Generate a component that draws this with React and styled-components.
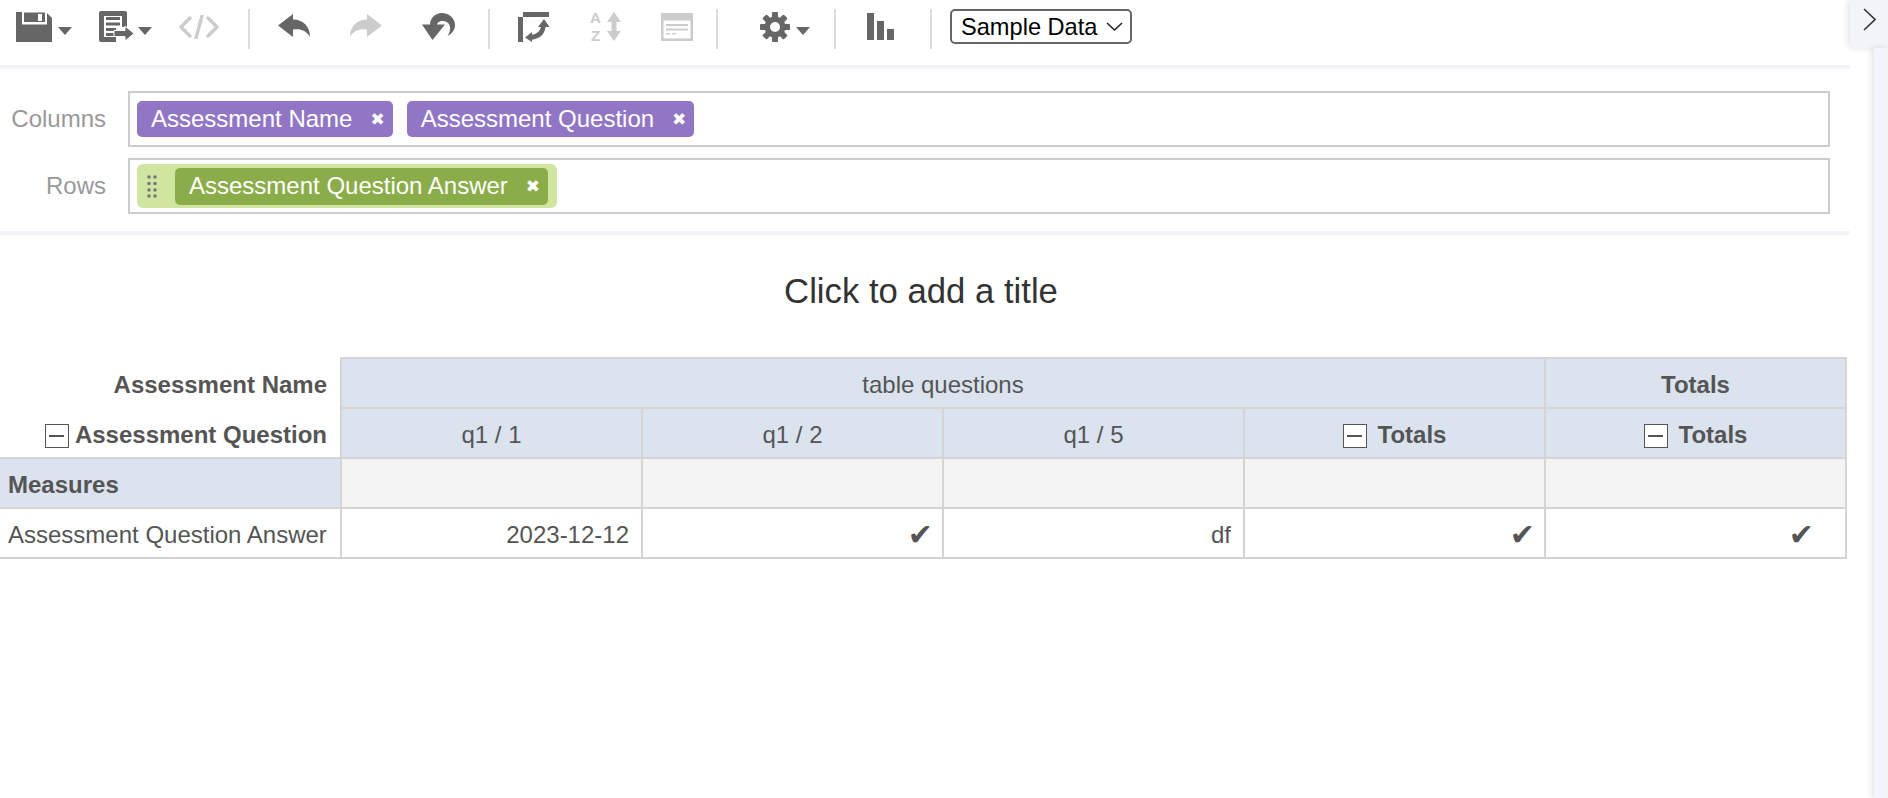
import { createGlobalStyle, styled } from "styled-components";

const DARK = "#666";
const LIGHT = "#ccc";

const GlobalStyle = createGlobalStyle`
  html, body {
    margin: 0;
    padding: 0;
    background: #fff;
    font-family: "Liberation Sans", Arial, sans-serif;
    overflow: hidden;
  }
`;

const Caret = () => (
  <CaretSvg width="14" height="8" viewBox="0 0 14 8">
    <path d="M0 0H14L7 8Z" fill={DARK} />
  </CaretSvg>
);

const SaveIcon = () => (
  <svg width="36" height="30" viewBox="0 0 36 30">
    <path d="M0 0H30L36 6V30H0Z" fill={DARK} />
    <path d="M6 0H31V12.500H6Z" fill="#fff" />
    <path d="M8 0.500H29V10H8Z" fill={DARK} />
    <path d="M22 2H26V9H22Z" fill="#fff" />
  </svg>
);

const ExportIcon = () => (
  <svg width="35" height="31" viewBox="0 0 35 31">
    <path
      d="M2 0H26Q28 0 28 2V16H23V5H5V26H17V31H2Q0 31 0 29V2Q0 0 2 0Z"
      fill={DARK}
    />
    <path d="M7 6H21V9H7ZM7 11.500H21V14.500H7ZM7 17H17V20H7ZM7 22H15V25H7Z" fill={DARK} />
    <path d="M15 19.500H26V15L35 22.500L26 30V25.500H15Z" fill={DARK} stroke="#fff" strokeWidth="1" />
  </svg>
);

const CodeIcon = () => (
  <svg width="40" height="24" viewBox="0 0 40 24">
    <path
      d="M11 3L2 12L11 21M29 3L38 12L29 21M23 1L17 23"
      fill="none"
      stroke={LIGHT}
      strokeWidth="3.400"
      strokeLinecap="round"
      strokeLinejoin="round"
    />
  </svg>
);

const ReplyIcon = ({ color, flip }) => (
  <ReplySvg width="32" height="23" viewBox="0 0 32 23">
    <path
      transform={flip ? "translate(32 0) scale(-1 1)" : undefined}
      d="M0 11.500L15 0V5.500C25 5.500 32 12 32 23C28 16 22 14.500 15 15.500V23Z"
      fill={color}
    />
  </ReplySvg>
);

const RevertIcon = () => (
  <svg width="33" height="27" viewBox="0 0 33 27">
    <path d="M0 11.500H23L10.500 27Z" fill={DARK} />
    <path
      d="M8 12C8 5 13 0 20 0C27 0 33 5 33 12C33 18 29 21 25.500 23C27.500 20 28.500 17 28 14C27.500 10 24 8 20.500 8C17.500 8 15 10 15 12Z"
      fill={DARK}
    />
  </svg>
);

const SwapIcon = () => (
  <svg width="31" height="30" viewBox="0 0 31 30">
    <path d="M5 0H31V5H5ZM0 5H5V30H0Z" fill={DARK} />
    <path d="M12 25.500C20 25 25 21 25.500 13" fill="none" stroke={DARK} strokeWidth="4.500" />
    <path d="M7 25.500L14 20V30ZM26 7L20 15H31.500Z" fill={DARK} />
  </svg>
);

const SortIcon = () => (
  <SortWrap>
    <SortLetters>
      <span>A</span>
      <span>Z</span>
    </SortLetters>
    <svg width="14" height="29" viewBox="0 0 14 29">
      <path d="M7 0L14 10H9.500V19H14L7 29L0 19H4.500V10H0Z" fill={LIGHT} />
    </svg>
  </SortWrap>
);

const PanelIcon = () => (
  <svg width="32" height="28" viewBox="0 0 32 28">
    <path d="M0 0H32V28H0ZM2.500 7.500V25.500H29.500V7.500Z" fill={LIGHT} fillRule="evenodd" />
    <path d="M5 11H27V13H5ZM5 15.500H27V17.500H5ZM5 20H9V21.500H5ZM11 20H15V21.500H11Z" fill={LIGHT} />
  </svg>
);

const GearIcon = () => (
  <svg width="30" height="30" viewBox="0 0 30 30">
    {[0, 45, 90, 135].map((angle) => (
      <rect
        key={angle}
        x="12"
        y="0"
        width="6"
        height="30"
        rx="1"
        fill={DARK}
        transform={`rotate(${angle} 15 15)`}
      />
    ))}
    <circle cx="15" cy="15" r="10.500" fill={DARK} />
    <circle cx="15" cy="15" r="5" fill="#fff" />
  </svg>
);

const BarsIcon = () => (
  <svg width="27" height="27" viewBox="0 0 27 27">
    <path d="M0 0H7V27H0ZM10 8H17V27H10ZM20 16H27V27H20Z" fill={DARK} />
  </svg>
);

const GripIcon = () => (
  <svg width="10" height="23" viewBox="0 0 10 23">
    {[2, 8].map((cx) =>
      [2, 8.500, 15, 21].map((cy) => (
        <circle key={`${cx}-${cy}`} cx={cx} cy={cy} r="1.800" fill="#777" />
      ))
    )}
  </svg>
);

const Tag = ({ label }) => (
  <Chip>
    {label}
    <ChipClose>✖</ChipClose>
  </Chip>
);

const App = () => {
  return (
    <Page>
      <GlobalStyle />
      <Main>
        <Toolbar>
          <ToolGroup $pad="0 29px 0 16px" $gap={27}>
            <Tool>
              <SaveIcon />
              <Caret />
            </Tool>
            <Tool $gap={4}>
              <ExportIcon />
              <Caret />
            </Tool>
            <Tool>
              <CodeIcon />
            </Tool>
          </ToolGroup>
          <Separator />
          <ToolGroup $pad="0 33px 0 28px" $gap={40}>
            <Tool>
              <ReplyIcon color={DARK} />
            </Tool>
            <Tool>
              <ReplyIcon color={LIGHT} flip />
            </Tool>
            <Tool>
              <RevertIcon />
            </Tool>
          </ToolGroup>
          <Separator />
          <ToolGroup $pad="0 23px 0 28px" $gap={40}>
            <Tool>
              <SwapIcon />
            </Tool>
            <Tool>
              <SortIcon />
            </Tool>
            <Tool>
              <PanelIcon />
            </Tool>
          </ToolGroup>
          <Separator />
          <ToolGroup $pad="0 24px 0 42px" $gap={0}>
            <Tool>
              <GearIcon />
              <Caret />
            </Tool>
          </ToolGroup>
          <Separator />
          <ToolGroup $pad="0 36px 0 31px" $gap={0}>
            <Tool>
              <BarsIcon />
            </Tool>
          </ToolGroup>
          <Separator />
          <SelectBox>
            <DataSelect defaultValue="sample">
              <option value="sample">Sample Data</option>
            </DataSelect>
            <svg width="17" height="9" viewBox="0 0 17 9">
              <path d="M1 1L8.500 8L16 1" fill="none" stroke="#222" strokeWidth="1.500" />
            </svg>
          </SelectBox>
        </Toolbar>

        <FieldArea>
          <FieldLabel>Columns</FieldLabel>
          <FieldBox>
            <Tag label="Assessment Name" />
            <Tag label="Assessment Question" />
          </FieldBox>
          <FieldLabel>Rows</FieldLabel>
          <FieldBox>
            <RowGroup>
              <GripIcon />
              <InnerChip>
                Assessment Question Answer
                <ChipClose>✖</ChipClose>
              </InnerChip>
            </RowGroup>
          </FieldBox>
        </FieldArea>

        <Title>Click to add a title</Title>

        <PivotTable>
          <colgroup>
            <col style={{ width: 341 }} />
            <col />
            <col />
            <col />
            <col />
            <col />
          </colgroup>
          <tbody>
            <tr>
              <AxisCell>Assessment Name</AxisCell>
              <HeadCell colSpan={4}>table questions</HeadCell>
              <HeadCell $bold>Totals</HeadCell>
            </tr>
            <tr>
              <AxisCell>
                <Minus />
                Assessment Question
              </AxisCell>
              <HeadCell>q1 / 1</HeadCell>
              <HeadCell>q1 / 2</HeadCell>
              <HeadCell>q1 / 5</HeadCell>
              <HeadCell $bold>
                <Minus />
                <TotalsLabel>Totals</TotalsLabel>
              </HeadCell>
              <HeadCell $bold>
                <Minus />
                <TotalsLabel>Totals</TotalsLabel>
              </HeadCell>
            </tr>
            <tr>
              <MeasureCell>Measures</MeasureCell>
              <EmptyCell />
              <EmptyCell />
              <EmptyCell />
              <EmptyCell />
              <EmptyCell />
            </tr>
            <tr>
              <RowLabelCell>Assessment Question Answer</RowLabelCell>
              <ValueCell>2023-12-12</ValueCell>
              <ValueCell>
                <Check>✔</Check>
              </ValueCell>
              <ValueCell>df</ValueCell>
              <ValueCell>
                <Check>✔</Check>
              </ValueCell>
              <ValueCell $inset={34}>
                <Check>✔</Check>
              </ValueCell>
            </tr>
          </tbody>
        </PivotTable>
      </Main>

      <SidePanel>
        <SideTab>
          <svg width="13" height="23" viewBox="0 0 13 23">
            <path d="M1 1L12 11.500L1 22" fill="none" stroke="#333" strokeWidth="1.600" />
          </svg>
        </SideTab>
        <SideStrip />
      </SidePanel>
    </Page>
  );
};

const Page = styled.div`
  display: flex;
  width: 1888px;
  height: 798px;
  overflow: hidden;
  color: #555;
`;

const Main = styled.main`
  width: 1850px;
  flex: none;
`;

const Toolbar = styled.div`
  display: flex;
  align-items: center;
  height: 53px;
  padding-bottom: 12px;
  border-bottom: 4px solid #f3f4fa;
`;

const ToolGroup = styled.div`
  display: flex;
  align-items: center;
  gap: ${(props) => props.$gap}px;
  padding: ${(props) => props.$pad};
`;

const Tool = styled.div`
  display: flex;
  align-items: center;
  gap: ${(props) => props.$gap ?? 6}px;
`;

const CaretSvg = styled.svg`
  margin-top: 9px;
`;

const ReplySvg = styled.svg`
  margin-bottom: 3px;
`;

const SortWrap = styled.div`
  display: flex;
  align-items: center;
  gap: 5px;
  width: 32px;
`;

const SortLetters = styled.div`
  display: flex;
  flex-direction: column;
  width: 13px;
  color: ${LIGHT};
  font-size: 15px;
  font-weight: 700;
  line-height: 17.400px;
  text-align: center;
`;

const Separator = styled.div`
  width: 2px;
  height: 40px;
  margin-top: 5px;
  background: #ddd;
  flex: none;
`;

const SelectBox = styled.div`
  display: flex;
  align-items: center;
  box-sizing: border-box;
  width: 182px;
  height: 35px;
  margin-left: 18px;
  padding: 0 7px 0 9px;
  border: 2px solid #666;
  border-radius: 5px;
  background: #fff;
`;

const DataSelect = styled.select`
  appearance: none;
  flex: 1;
  min-width: 0;
  padding: 0;
  border: none;
  outline: none;
  background: transparent;
  color: #000;
  font-family: "Liberation Sans", Arial, sans-serif;
  font-size: 23.600px;
`;

const FieldArea = styled.div`
  display: grid;
  grid-template-columns: 106px 1fr;
  column-gap: 22px;
  row-gap: 11px;
  align-items: center;
  padding: 22px 20px 17px 0;
  border-bottom: 4px solid #f3f4fa;
`;

const FieldLabel = styled.div`
  color: #999;
  font-size: 24px;
  text-align: right;
`;

const FieldBox = styled.div`
  display: flex;
  align-items: center;
  gap: 14px;
  box-sizing: border-box;
  height: 56px;
  padding: 0 7px;
  border: 2px solid #ccc;
`;

const Chip = styled.div`
  display: flex;
  align-items: center;
  height: 36px;
  padding: 0 8px 0 14px;
  border-radius: 5px;
  background: #9176c5;
  color: #fff;
  font-size: 24px;
`;

const ChipClose = styled.span`
  margin-left: 18px;
  font-family: "DejaVu Sans", sans-serif;
  font-size: 17px;
`;

const RowGroup = styled.div`
  display: flex;
  align-items: center;
  gap: 18px;
  height: 44px;
  padding: 0 9px 0 10px;
  border-radius: 6px;
  background: #d0e6a0;
`;

const InnerChip = styled(Chip)`
  height: 37px;
  background: #8bad49;
`;

const Title = styled.h1`
  width: 1842px;
  margin: 0;
  padding: 33px 0 43px;
  color: #333;
  font-size: 34.700px;
  font-weight: 400;
  line-height: 46px;
  text-align: center;
`;

const PivotTable = styled.table`
  table-layout: fixed;
  width: 1847px;
  border-collapse: collapse;
  font-size: 24px;
`;

const cellBorder = "2px solid #d4d4d4";

const AxisCell = styled.td`
  height: 44px;
  padding: 4px 13px 0 8px;
  border: none;
  font-weight: 700;
  text-align: right;
  white-space: nowrap;
`;

const HeadCell = styled.td`
  height: 44px;
  padding: 4px 0 0;
  border: ${cellBorder};
  background: #dbe3ef;
  font-weight: ${(props) => (props.$bold ? 700 : 400)};
  text-align: center;
`;

const MeasureCell = styled.td`
  height: 44px;
  padding: 4px 8px 0;
  border: ${cellBorder};
  border-left: none;
  background: #dbe3ef;
  font-weight: 700;
`;

const EmptyCell = styled.td`
  height: 48px;
  padding: 0;
  border: ${cellBorder};
  background: #f3f3f3;
`;

const RowLabelCell = styled.td`
  height: 44px;
  padding: 4px 8px 0;
  border: ${cellBorder};
  border-left: none;
  white-space: nowrap;
`;

const ValueCell = styled.td`
  height: 44px;
  padding: 4px ${(props) => props.$inset ?? 12}px 0 12px;
  border: ${cellBorder};
  text-align: right;
`;

const Check = styled.span`
  margin-right: -3px;
  font-family: "DejaVu Sans", sans-serif;
  font-size: 30px;
  line-height: 1;
`;

const TotalsLabel = styled.span`
  margin-left: 5px;
`;

const Minus = styled.span`
  display: inline-block;
  box-sizing: border-box;
  width: 24px;
  height: 24px;
  margin-right: 6px;
  border: 1px solid #555;
  background: linear-gradient(#555, #555) center / 15px 2px no-repeat, #fff;
  vertical-align: -5px;
`;

const SidePanel = styled.aside`
  display: flex;
  flex-direction: column;
  width: 38px;
  flex: none;
`;

const SideTab = styled.div`
  display: flex;
  align-items: center;
  justify-content: center;
  box-sizing: border-box;
  height: 48px;
  padding-bottom: 10px;
  border-bottom-left-radius: 5px;
  background: #f3f4fa;
  box-shadow: -2px 0 6px rgba(0, 0, 0, 0.12);
`;

const SideStrip = styled.div`
  flex: 1;
  align-self: flex-end;
  width: 14px;
  background: #f3f4fa;
  box-shadow: -2px 0 6px rgba(0, 0, 0, 0.12);
`;

export default App;
